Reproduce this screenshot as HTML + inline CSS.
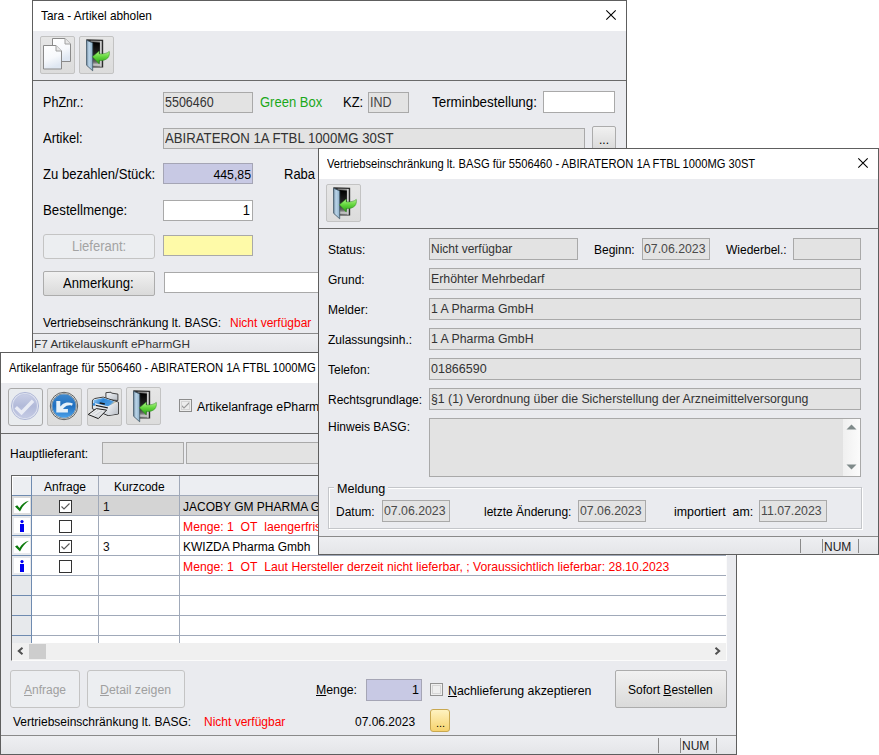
<!DOCTYPE html>
<html><head><meta charset="utf-8">
<style>
*{box-sizing:border-box;margin:0;padding:0}
html,body{width:879px;height:755px;overflow:hidden;background:#fff;font-family:"Liberation Sans",sans-serif;color:#000}
.a{position:absolute}
.t{position:absolute;white-space:nowrap}
svg{overflow:visible}
</style></head><body>
<div class="a" style="left:32px;top:0px;width:595px;height:353px;background:#eaebef;border:1px solid #5e5e5e"></div>
<div class="a" style="left:33px;top:1px;width:593px;height:30px;background:#fff"></div>
<div class="t" style="left:41px;top:9px;font-size:12.4px;line-height:14px;color:#000;;transform:scaleX(0.953);transform-origin:0 0">Tara - Artikel abholen</div>
<svg class="a" style="left:606px;top:10px" width="10" height="10" viewBox="0 0 10 10"><path d="M0.3 0.3L9.7 9.7M9.7 0.3L0.3 9.7" stroke="#000" stroke-width="1.1"/></svg>
<div class="a" style="left:33px;top:80px;width:593px;height:1px;background:#6a6a6a"></div>
<div class="a" style="left:40px;top:36px;width:35px;height:38px;background:linear-gradient(#e6e6e6,#dcdcdc);border:1px solid #c3c3c3;border-radius:2px"></div>
<div class="a" style="left:79px;top:36px;width:35px;height:38px;background:linear-gradient(#e6e6e6,#dcdcdc);border:1px solid #c3c3c3;border-radius:2px"></div>
<svg class="a" style="left:43px;top:38px" width="28" height="32" viewBox="0 0 28 32">
<defs><linearGradient id="pg" x1="0" y1="0" x2="0.3" y2="1"><stop offset="0" stop-color="#fff"/><stop offset="0.6" stop-color="#f7f9fc"/><stop offset="1" stop-color="#dfe7f2"/></linearGradient></defs>
<path d="M9.5 0.5H22L27.5 6V23.5H9.5Z" fill="url(#pg)" stroke="#8a8a8a"/>
<path d="M22 0.5V6H27.5" fill="#e8e8e8" stroke="#a0a0a0"/>
<path d="M0.5 7.5H13L18.5 13V31H0.5Z" fill="url(#pg)" stroke="#8a8a8a"/>
<path d="M13 7.5V13H18.5" fill="#e8e8e8" stroke="#a0a0a0"/>
</svg>
<svg class="a" style="left:85px;top:38px" width="26" height="34" viewBox="0 0 26 34">
<defs>
<linearGradient id="dma" x1="0" y1="0" x2="1" y2="0"><stop offset="0" stop-color="#6a6a6a"/><stop offset="0.8" stop-color="#9c9c9c"/><stop offset="0.9" stop-color="#e0e0e0"/><stop offset="1" stop-color="#7a7a7a"/></linearGradient>
<linearGradient id="dia" x1="0" y1="0" x2="0" y2="1"><stop offset="0" stop-color="#000"/><stop offset="0.6" stop-color="#2a2a2a"/><stop offset="0.85" stop-color="#6a6a6a"/><stop offset="1" stop-color="#e6e6e6"/></linearGradient>
<linearGradient id="dpa" x1="0" y1="0" x2="1" y2="0"><stop offset="0" stop-color="#6d879c"/><stop offset="0.4" stop-color="#bcd6ea"/><stop offset="1" stop-color="#8fb0c8"/></linearGradient>
<linearGradient id="gaa" x1="0" y1="0" x2="0" y2="1"><stop offset="0" stop-color="#b4f58c"/><stop offset="0.45" stop-color="#62d63c"/><stop offset="1" stop-color="#2a9a18"/></linearGradient>
</defs>
<path d="M1.3 1.2L18.2 1.8V29.6H4.5Z" fill="#2c2c2c"/>
<path d="M5.6 2.6L17 3.1V28.7H6Z" fill="url(#dma)"/>
<path d="M6.8 4.1L14.9 4.4V27.6H7Z" fill="url(#dia)"/>
<path d="M1.5 2.2L7.7 4.9V32.8L1.6 27.3Z" fill="url(#dpa)" stroke="#3f5666" stroke-width="0.8"/>
<path d="M7.4 18.8L14.2 13.1V15.9C18.5 16.1 22 15.4 24.3 13.4C25 18.5 22.8 22.8 14.2 22.6V25.9Z" fill="url(#gaa)" stroke="#2a8a1a" stroke-width="0.5"/>
</svg>
<div class="t" style="left:43px;top:96px;font-size:12.6px;line-height:14px;;transform:scaleY(1.1);transform-origin:0 12px">PhZnr.:</div>
<div class="a" style="left:163px;top:92px;width:90px;height:21px;background:#e3e3e3;border:1px solid #a9a9a9"></div>
<div class="t" style="left:165px;top:96px;font-size:12.5px;line-height:14px;color:#333;;transform:scaleY(1.1);transform-origin:0 12px">5506460</div>
<div class="t" style="left:260px;top:95px;font-size:13px;line-height:15px;color:#1aa81a;;transform:scaleY(1.1);transform-origin:0 12px">Green Box</div>
<div class="t" style="left:343px;top:95px;font-size:13px;line-height:15px;;transform:scaleY(1.1);transform-origin:0 12px">KZ:</div>
<div class="a" style="left:368px;top:92px;width:41px;height:21px;background:#e3e3e3;border:1px solid #a9a9a9"></div>
<div class="t" style="left:370px;top:96px;font-size:12.5px;line-height:14px;color:#444;;transform:scaleY(1.1);transform-origin:0 12px">IND</div>
<div class="t" style="left:432px;top:95px;font-size:13.4px;line-height:15px;;transform:scaleY(1.1);transform-origin:0 12px">Terminbestellung:</div>
<div class="a" style="left:543px;top:91px;width:72px;height:22px;background:#fff;border:1px solid #a9a9a9"></div>
<div class="t" style="left:43px;top:131px;font-size:13px;line-height:15px;;transform:scaleY(1.1);transform-origin:0 12px">Artikel:</div>
<div class="a" style="left:163px;top:128px;width:422px;height:21px;background:#e3e3e3;border:1px solid #a9a9a9"></div>
<div class="t" style="left:165px;top:131px;font-size:13.2px;line-height:15px;color:#333;;transform:scaleY(1.1);transform-origin:0 12px">ABIRATERON 1A FTBL 1000MG 30ST</div>
<div class="a" style="left:592px;top:126px;width:24px;height:24px;background:linear-gradient(#f1f1f1,#dadada);border:1px solid #acacac;border-radius:2px"></div>
<div class="t" style="left:599px;top:133px;font-size:12px;line-height:14px;color:#000;">...</div>
<div class="t" style="left:43px;top:167px;font-size:13.1px;line-height:15px;;transform:scaleY(1.1);transform-origin:0 12px">Zu bezahlen/Stück:</div>
<div class="a" style="left:163px;top:163px;width:90px;height:21px;background:#c8c9e4;border:1px solid #a5a5b5"></div>
<div class="t" style="right:628px;top:168px;font-size:12.3px;line-height:14px;text-align:right;color:#000;;transform:scaleY(1.1);transform-origin:0 12px">445,85</div>
<div class="t" style="left:284px;top:167px;font-size:13px;line-height:15px;;transform:scaleY(1.1);transform-origin:0 12px">Raba</div>
<div class="t" style="left:43px;top:203px;font-size:13.3px;line-height:15px;;transform:scaleY(1.1);transform-origin:0 12px">Bestellmenge:</div>
<div class="a" style="left:163px;top:200px;width:90px;height:21px;background:#fff;border:1px solid #a9a9a9"></div>
<div class="t" style="right:629px;top:203px;font-size:13px;line-height:15px;text-align:right;color:#000;;transform:scaleY(1.1);transform-origin:0 12px">1</div>
<div class="a" style="left:43px;top:234px;width:112px;height:25px;background:#eceef1;border:1px solid #c4c4c4;border-radius:3px"></div>
<div class="t" style="left:72px;top:239px;font-size:13px;line-height:15px;color:#a3a3a3;;transform:scaleY(1.1);transform-origin:0 12px">Lieferant:</div>
<div class="a" style="left:163px;top:235px;width:90px;height:21px;background:#fefaa8;border:1px solid #a9a9a9"></div>
<div class="a" style="left:43px;top:271px;width:112px;height:25px;background:linear-gradient(#f1f1f1,#dadada);border:1px solid #acacac;border-radius:2px"></div>
<div class="t" style="left:63px;top:276px;font-size:13.1px;line-height:15px;;transform:scaleY(1.1);transform-origin:0 12px">Anmerkung:</div>
<div class="a" style="left:164px;top:272px;width:400px;height:21px;background:#fff;border:1px solid #a9a9a9"></div>
<div class="t" style="left:43px;top:316px;font-size:12px;line-height:14px;">Vertriebseinschränkung lt. BASG:</div>
<div class="t" style="left:230px;top:316px;font-size:12px;line-height:14px;color:#ff0000;">Nicht verfügbar</div>
<div class="a" style="left:33px;top:333px;width:593px;height:1px;background:#8a8a8a"></div>
<div class="a" style="left:33px;top:334px;width:593px;height:18px;background:linear-gradient(#eeeff2,#e4e5e8)"></div>
<div class="t" style="left:34px;top:337px;font-size:11.8px;line-height:14px;color:#333;">F7 Artikelauskunft ePharmGH</div>
<div class="a" style="left:0px;top:352px;width:737px;height:403px;background:#eaebef;border:1px solid #5e5e5e"></div>
<div class="a" style="left:1px;top:353px;width:735px;height:30px;background:#fff"></div>
<div class="t" style="left:9px;top:361px;font-size:12.4px;line-height:14px;color:#000;;transform:scaleX(0.907);transform-origin:0 0">Artikelanfrage für 5506460 - ABIRATERON 1A FTBL 1000MG 30ST</div>
<div class="a" style="left:1px;top:433px;width:735px;height:1px;background:#6a6a6a"></div>
<div class="a" style="left:8px;top:388px;width:35px;height:38px;background:#e9ecef;border:1px solid #a9a9a9;border-radius:3px"></div>
<div class="a" style="left:47px;top:388px;width:35px;height:38px;background:linear-gradient(#e6e6e6,#dcdcdc);border:1px solid #c3c3c3;border-radius:2px"></div>
<div class="a" style="left:87px;top:388px;width:35px;height:38px;background:linear-gradient(#e6e6e6,#dcdcdc);border:1px solid #c3c3c3;border-radius:2px"></div>
<div class="a" style="left:126px;top:387px;width:35px;height:38px;background:linear-gradient(#e6e6e6,#dcdcdc);border:1px solid #c3c3c3;border-radius:2px"></div>
<svg class="a" style="left:10px;top:391px" width="30" height="30" viewBox="0 0 30 30">
<defs><linearGradient id="cd" x1="0" y1="0" x2="0" y2="1"><stop offset="0" stop-color="#c9cfe6"/><stop offset="0.5" stop-color="#b2bad9"/><stop offset="1" stop-color="#c4cae4"/></linearGradient></defs>
<circle cx="15" cy="15" r="13.6" fill="#dfe3f0" stroke="#aab3d4" stroke-width="0.9"/>
<circle cx="15" cy="15" r="11.8" fill="url(#cd)" stroke="#b9c1de" stroke-width="0.6"/>
<path d="M5.8 16.3L11.5 21.8L23 9.8" fill="none" stroke="#e9ecf5" stroke-width="3.4"/>
</svg>
<svg class="a" style="left:49px;top:391px" width="30" height="30" viewBox="0 0 30 30">
<defs><linearGradient id="ub" x1="0" y1="0" x2="0" y2="1"><stop offset="0" stop-color="#3f88cc"/><stop offset="0.5" stop-color="#1f6fc0"/><stop offset="1" stop-color="#4aa0e8"/></linearGradient></defs>
<circle cx="15" cy="15" r="13.7" fill="#e6eef0" stroke="#505050" stroke-width="0.9"/>
<circle cx="15" cy="15" r="12.3" fill="none" stroke="#6a6a6a" stroke-width="0.8"/>
<circle cx="15" cy="15" r="11.7" fill="url(#ub)"/>
<path d="M7.3 10H11.3V15.5L13.5 13.2C16.5 11 20.5 10.8 23.8 12.6L23 14.8C20 13.8 17.5 14.5 15 16.8L14 18H18.9V21.5H7.3Z" fill="#e6f0f8"/>
</svg>
<svg class="a" style="left:87px;top:388px" width="35" height="37" viewBox="0 0 35 37">
<defs><linearGradient id="pb" x1="0" y1="0" x2="0" y2="1"><stop offset="0" stop-color="#fdfdfd"/><stop offset="1" stop-color="#cfd4da"/></linearGradient>
<linearGradient id="pr" x1="0" y1="0" x2="1" y2="1"><stop offset="0" stop-color="#f4f6f8"/><stop offset="1" stop-color="#b9bec6"/></linearGradient>
<linearGradient id="pt" x1="0" y1="0" x2="1" y2="0.3"><stop offset="0" stop-color="#9ccff6"/><stop offset="0.45" stop-color="#2f86d6"/><stop offset="0.85" stop-color="#4a9ae0"/><stop offset="1" stop-color="#d8c7a6"/></linearGradient>
<linearGradient id="pp" x1="0" y1="0" x2="1" y2="1"><stop offset="0" stop-color="#ffffff"/><stop offset="1" stop-color="#c9cdd2"/></linearGradient></defs>
<path d="M18.9 4.7L24 4.2L24.5 5.1L30.9 6.1V12.5L18.9 11.5Z" fill="url(#pr)" stroke="#333" stroke-width="0.9"/>
<path d="M5.4 13C5.6 11.5 7 10.6 9 10.3L16.2 9.1L31.4 14.2V26L21 27.6L5.4 20.8Z" fill="url(#pb)" stroke="#262626" stroke-width="0.9"/>
<path d="M6.5 12L16.2 9.9L29.8 14.3L21 18.2L6.6 14.8Z" fill="url(#pt)"/>
<path d="M12.7 15L17.8 16" stroke="#1a1a1a" stroke-width="1.4"/>
<path d="M8.6 16.8L20.8 19.3V20.4L8.8 18Z" fill="#1c1c1c"/>
<path d="M21 18.4L30.8 14.6V25.7L21 27.2Z" fill="url(#pr)"/>
<path d="M7 15.6A0.9 0.9 0 1 0 7.01 15.6" fill="#2f86d6" stroke="#2f86d6"/>
<path d="M1.2 26.5L9.3 20.6L19.6 22.1L11.3 30.6Z" fill="url(#pp)" stroke="#1e1e1e" stroke-width="1"/>
<path d="M5 26L11.5 21.8M8 27.5L15 23" stroke="#b0b6bd" stroke-width="0.5"/>
</svg>
<svg class="a" style="left:132px;top:389px" width="26" height="34" viewBox="0 0 26 34">
<defs>
<linearGradient id="dmb" x1="0" y1="0" x2="1" y2="0"><stop offset="0" stop-color="#6a6a6a"/><stop offset="0.8" stop-color="#9c9c9c"/><stop offset="0.9" stop-color="#e0e0e0"/><stop offset="1" stop-color="#7a7a7a"/></linearGradient>
<linearGradient id="dib" x1="0" y1="0" x2="0" y2="1"><stop offset="0" stop-color="#000"/><stop offset="0.6" stop-color="#2a2a2a"/><stop offset="0.85" stop-color="#6a6a6a"/><stop offset="1" stop-color="#e6e6e6"/></linearGradient>
<linearGradient id="dpb" x1="0" y1="0" x2="1" y2="0"><stop offset="0" stop-color="#6d879c"/><stop offset="0.4" stop-color="#bcd6ea"/><stop offset="1" stop-color="#8fb0c8"/></linearGradient>
<linearGradient id="gab" x1="0" y1="0" x2="0" y2="1"><stop offset="0" stop-color="#b4f58c"/><stop offset="0.45" stop-color="#62d63c"/><stop offset="1" stop-color="#2a9a18"/></linearGradient>
</defs>
<path d="M1.3 1.2L18.2 1.8V29.6H4.5Z" fill="#2c2c2c"/>
<path d="M5.6 2.6L17 3.1V28.7H6Z" fill="url(#dmb)"/>
<path d="M6.8 4.1L14.9 4.4V27.6H7Z" fill="url(#dib)"/>
<path d="M1.5 2.2L7.7 4.9V32.8L1.6 27.3Z" fill="url(#dpb)" stroke="#3f5666" stroke-width="0.8"/>
<path d="M7.4 18.8L14.2 13.1V15.9C18.5 16.1 22 15.4 24.3 13.4C25 18.5 22.8 22.8 14.2 22.6V25.9Z" fill="url(#gab)" stroke="#2a8a1a" stroke-width="0.5"/>
</svg>
<svg class="a" style="left:179px;top:399px" width="13" height="13" viewBox="0 0 13 13"><rect x="0.5" y="0.5" width="12" height="12" fill="#ececec" stroke="#8c8c8c"/><path d="M2.5 6.5L5 9L10.5 3.5" fill="none" stroke="#9a9a9a" stroke-width="1.1"/></svg>
<div class="a" style="left:181px;top:401px;width:9px;height:9px;border:1px solid #d4d4d4"></div>
<div class="t" style="left:197px;top:400px;font-size:12.3px;line-height:14px;">Artikelanfrage ePharmGH</div>
<div class="t" style="left:10px;top:447px;font-size:12px;line-height:14px;">Hauptlieferant:</div>
<div class="a" style="left:102px;top:442px;width:82px;height:22px;background:#e3e3e3;border:1px solid #a9a9a9"></div>
<div class="a" style="left:186px;top:442px;width:400px;height:22px;background:#e3e3e3;border:1px solid #a9a9a9"></div>
<div class="a" style="left:11px;top:475px;width:716px;height:186px;background:#fff;border-left:1px solid #646464;border-top:1px solid #646464;border-right:1px solid #fbfbfb;border-bottom:1px solid #fbfbfb"></div>
<div class="a" style="left:12px;top:476px;width:714px;height:19px;background:#eceef2"></div>
<div class="a" style="left:12px;top:476px;width:19px;height:19px;background:#eceef2;border-left:1px solid #fff;border-top:1px solid #fff"></div>
<div class="t" style="left:44px;top:480px;font-size:12px;line-height:14px;">Anfrage</div>
<div class="t" style="left:114px;top:480px;font-size:12px;line-height:14px;">Kurzcode</div>
<div class="a" style="left:31px;top:496px;width:695px;height:19px;background:#d4d4d4"></div>
<div class="a" style="left:12px;top:496px;width:19px;height:147px;background:#e7e9ec"></div>
<div class="a" style="left:12px;top:496px;width:19px;height:19px;background:#dcdcdc"></div>
<div class="a" style="left:14px;top:498px;width:16px;height:15px;background:#fff"></div>
<div class="a" style="left:14px;top:518px;width:16px;height:15px;background:#fff"></div>
<div class="a" style="left:14px;top:538px;width:16px;height:15px;background:#fff"></div>
<div class="a" style="left:14px;top:558px;width:16px;height:15px;background:#fff"></div>
<div class="a" style="left:31px;top:476px;width:1px;height:167px;background:#6f8bb0"></div>
<div class="a" style="left:98px;top:476px;width:1px;height:167px;background:#a0a9b9"></div>
<div class="a" style="left:179px;top:476px;width:1px;height:167px;background:#a0a9b9"></div>
<div class="a" style="left:32px;top:495px;width:694px;height:1px;background:#a0a9b9"></div>
<div class="a" style="left:12px;top:495px;width:19px;height:1px;background:#6f8bb0"></div>
<div class="a" style="left:32px;top:515px;width:694px;height:1px;background:#a0a9b9"></div>
<div class="a" style="left:12px;top:515px;width:19px;height:1px;background:#6f8bb0"></div>
<div class="a" style="left:32px;top:535px;width:694px;height:1px;background:#a0a9b9"></div>
<div class="a" style="left:12px;top:535px;width:19px;height:1px;background:#6f8bb0"></div>
<div class="a" style="left:32px;top:555px;width:694px;height:1px;background:#a0a9b9"></div>
<div class="a" style="left:12px;top:555px;width:19px;height:1px;background:#6f8bb0"></div>
<div class="a" style="left:32px;top:575px;width:694px;height:1px;background:#a0a9b9"></div>
<div class="a" style="left:12px;top:575px;width:19px;height:1px;background:#6f8bb0"></div>
<div class="a" style="left:32px;top:595px;width:694px;height:1px;background:#a0a9b9"></div>
<div class="a" style="left:12px;top:595px;width:19px;height:1px;background:#6f8bb0"></div>
<div class="a" style="left:32px;top:615px;width:694px;height:1px;background:#a0a9b9"></div>
<div class="a" style="left:12px;top:615px;width:19px;height:1px;background:#6f8bb0"></div>
<div class="a" style="left:32px;top:635px;width:694px;height:1px;background:#a0a9b9"></div>
<div class="a" style="left:12px;top:635px;width:19px;height:1px;background:#6f8bb0"></div>
<svg class="a" style="left:15px;top:500px" width="14" height="12" viewBox="0 0 14 12"><path d="M0 6.5L2.2 5.2L4.5 8C6.5 4.5 9.5 1.8 14 0.8C10 3.5 7.5 6.5 5 11.5Z" fill="#0b7a0b"/></svg>
<svg class="a" style="left:19px;top:520px" width="6" height="12" viewBox="0 0 6 12"><circle cx="3" cy="1.6" r="1.6" fill="#0000f0"/><rect x="1" y="4" width="4" height="8" fill="#0000f0"/></svg>
<svg class="a" style="left:15px;top:540px" width="14" height="12" viewBox="0 0 14 12"><path d="M0 6.5L2.2 5.2L4.5 8C6.5 4.5 9.5 1.8 14 0.8C10 3.5 7.5 6.5 5 11.5Z" fill="#0b7a0b"/></svg>
<svg class="a" style="left:19px;top:560px" width="6" height="12" viewBox="0 0 6 12"><circle cx="3" cy="1.6" r="1.6" fill="#0000f0"/><rect x="1" y="4" width="4" height="8" fill="#0000f0"/></svg>
<svg class="a" style="left:59px;top:500px" width="13" height="13" viewBox="0 0 13 13"><rect x="0.5" y="0.5" width="12" height="12" fill="#fff" stroke="#333"/><path d="M2.5 6.5L5 9L10.5 3.5" fill="none" stroke="#555" stroke-width="1.1"/></svg>
<svg class="a" style="left:59px;top:520px" width="13" height="13" viewBox="0 0 13 13"><rect x="0.5" y="0.5" width="12" height="12" fill="#fff" stroke="#333"/></svg>
<svg class="a" style="left:59px;top:540px" width="13" height="13" viewBox="0 0 13 13"><rect x="0.5" y="0.5" width="12" height="12" fill="#fff" stroke="#333"/><path d="M2.5 6.5L5 9L10.5 3.5" fill="none" stroke="#555" stroke-width="1.1"/></svg>
<svg class="a" style="left:59px;top:560px" width="13" height="13" viewBox="0 0 13 13"><rect x="0.5" y="0.5" width="12" height="12" fill="#fff" stroke="#333"/></svg>
<div class="t" style="left:103px;top:500px;font-size:12px;line-height:14px;color:#111;">1</div>
<div class="t" style="left:183px;top:500px;font-size:12px;line-height:14px;">JACOBY GM PHARMA GmbH</div>
<div class="t" style="left:183px;top:520px;font-size:12.2px;line-height:14px;color:#ff0000;">Menge: 1&nbsp; OT&nbsp; laengerfristig nicht lieferbar</div>
<div class="t" style="left:103px;top:540px;font-size:12px;line-height:14px;color:#111;">3</div>
<div class="t" style="left:183px;top:540px;font-size:12px;line-height:14px;">KWIZDA Pharma Gmbh</div>
<div class="t" style="left:183px;top:560px;font-size:12.2px;line-height:14px;color:#ff0000;">Menge: 1&nbsp; OT&nbsp; Laut Hersteller derzeit nicht lieferbar, ; Voraussichtlich lieferbar: 28.10.2023</div>
<div class="a" style="left:12px;top:643px;width:714px;height:17px;background:#f0f0f0"></div>
<div class="a" style="left:29px;top:644px;width:17px;height:15px;background:#cdcdcd"></div>
<svg class="a" style="left:17px;top:647px" width="7" height="8" viewBox="0 0 7 8"><path d="M5.5 0.8L1.8 4L5.5 7.2" fill="none" stroke="#505050" stroke-width="2"/></svg>
<svg class="a" style="left:714px;top:647px" width="7" height="8" viewBox="0 0 7 8"><path d="M1.5 0.8L5.2 4L1.5 7.2" fill="none" stroke="#505050" stroke-width="2"/></svg>
<div class="a" style="left:10px;top:670px;width:70px;height:38px;background:#eceef1;border:1px solid #c4c4c4;border-radius:3px"></div>
<div class="t" style="left:24px;top:683px;font-size:12px;line-height:14px;color:#a0a0a0;"><u>A</u>nfrage</div>
<div class="a" style="left:87px;top:670px;width:98px;height:38px;background:#eceef1;border:1px solid #c4c4c4;border-radius:3px"></div>
<div class="t" style="left:100px;top:683px;font-size:12.3px;line-height:14px;color:#a0a0a0;"><u>D</u>etail zeigen</div>
<div class="t" style="left:316px;top:683px;font-size:12.3px;line-height:14px;"><u>M</u>enge:</div>
<div class="a" style="left:366px;top:679px;width:56px;height:22px;background:#c8c9e4;border:1px solid #a5a5b5"></div>
<div class="t" style="right:460px;top:683px;font-size:12.5px;line-height:14px;text-align:right;color:#000;">1</div>
<svg class="a" style="left:430px;top:683px" width="13" height="13" viewBox="0 0 13 13"><rect x="0.5" y="0.5" width="12" height="12" fill="#efefef" stroke="#939393"/></svg>
<div class="a" style="left:432px;top:685px;width:9px;height:9px;border:1px solid #d6d6d6"></div>
<div class="t" style="left:448px;top:684px;font-size:12.35px;line-height:14px;"><u>N</u>achlieferung akzeptieren</div>
<div class="a" style="left:615px;top:670px;width:112px;height:38px;background:linear-gradient(#f1f1f1,#dadada);border:1px solid #acacac;border-radius:2px"></div>
<div class="t" style="left:628px;top:683px;font-size:12px;line-height:14px;">Sofort <u>B</u>estellen</div>
<div class="t" style="left:13px;top:715px;font-size:12px;line-height:14px;">Vertriebseinschränkung lt. BASG:</div>
<div class="t" style="left:204px;top:715px;font-size:12px;line-height:14px;color:#ff0000;">Nicht verfügbar</div>
<div class="t" style="left:355px;top:715px;font-size:12px;line-height:14px;">07.06.2023</div>
<div class="a" style="left:430px;top:709px;width:20px;height:23px;background:linear-gradient(#fff2c0,#f6d36e);border:1px solid #c9a850;border-radius:3px"></div>
<div class="t" style="left:436px;top:716px;font-size:11px;line-height:14px;color:#000;">...</div>
<div class="a" style="left:1px;top:735px;width:735px;height:1px;background:#8a8a8a"></div>
<div class="a" style="left:1px;top:736px;width:735px;height:18px;background:linear-gradient(#eeeff2,#e4e5e8)"></div>
<div class="a" style="left:658px;top:738px;width:1px;height:15px;background:#8a8a8a"></div>
<div class="a" style="left:680px;top:738px;width:1px;height:15px;background:#8a8a8a"></div>
<div class="a" style="left:716px;top:738px;width:1px;height:15px;background:#8a8a8a"></div>
<div class="t" style="left:682px;top:739px;font-size:12px;line-height:14px;color:#222;">NUM</div>
<div class="a" style="left:318px;top:148px;width:561px;height:407px;background:#eaebef;border:1px solid #5e5e5e"></div>
<div class="a" style="left:319px;top:149px;width:559px;height:30px;background:#fff"></div>
<div class="t" style="left:327px;top:157px;font-size:12.4px;line-height:14px;color:#000;;transform:scaleX(0.901);transform-origin:0 0">Vertriebseinschränkung lt. BASG für 5506460 - ABIRATERON 1A FTBL 1000MG 30ST</div>
<svg class="a" style="left:858px;top:158px" width="10" height="10" viewBox="0 0 10 10"><path d="M0.3 0.3L9.7 9.7M9.7 0.3L0.3 9.7" stroke="#000" stroke-width="1.1"/></svg>
<div class="a" style="left:319px;top:228px;width:559px;height:1px;background:#6a6a6a"></div>
<div class="a" style="left:326px;top:184px;width:35px;height:38px;background:linear-gradient(#e6e6e6,#dcdcdc);border:1px solid #c3c3c3;border-radius:2px"></div>
<svg class="a" style="left:332px;top:186px" width="26" height="34" viewBox="0 0 26 34">
<defs>
<linearGradient id="dmc" x1="0" y1="0" x2="1" y2="0"><stop offset="0" stop-color="#6a6a6a"/><stop offset="0.8" stop-color="#9c9c9c"/><stop offset="0.9" stop-color="#e0e0e0"/><stop offset="1" stop-color="#7a7a7a"/></linearGradient>
<linearGradient id="dic" x1="0" y1="0" x2="0" y2="1"><stop offset="0" stop-color="#000"/><stop offset="0.6" stop-color="#2a2a2a"/><stop offset="0.85" stop-color="#6a6a6a"/><stop offset="1" stop-color="#e6e6e6"/></linearGradient>
<linearGradient id="dpc" x1="0" y1="0" x2="1" y2="0"><stop offset="0" stop-color="#6d879c"/><stop offset="0.4" stop-color="#bcd6ea"/><stop offset="1" stop-color="#8fb0c8"/></linearGradient>
<linearGradient id="gac" x1="0" y1="0" x2="0" y2="1"><stop offset="0" stop-color="#b4f58c"/><stop offset="0.45" stop-color="#62d63c"/><stop offset="1" stop-color="#2a9a18"/></linearGradient>
</defs>
<path d="M1.3 1.2L18.2 1.8V29.6H4.5Z" fill="#2c2c2c"/>
<path d="M5.6 2.6L17 3.1V28.7H6Z" fill="url(#dmc)"/>
<path d="M6.8 4.1L14.9 4.4V27.6H7Z" fill="url(#dic)"/>
<path d="M1.5 2.2L7.7 4.9V32.8L1.6 27.3Z" fill="url(#dpc)" stroke="#3f5666" stroke-width="0.8"/>
<path d="M7.4 18.8L14.2 13.1V15.9C18.5 16.1 22 15.4 24.3 13.4C25 18.5 22.8 22.8 14.2 22.6V25.9Z" fill="url(#gac)" stroke="#2a8a1a" stroke-width="0.5"/>
</svg>
<div class="t" style="left:328px;top:243px;font-size:12px;line-height:14px;">Status:</div>
<div class="t" style="left:328px;top:273px;font-size:12px;line-height:14px;">Grund:</div>
<div class="t" style="left:328px;top:303px;font-size:12px;line-height:14px;">Melder:</div>
<div class="t" style="left:328px;top:333px;font-size:12px;line-height:14px;">Zulassungsinh.:</div>
<div class="t" style="left:328px;top:363px;font-size:12px;line-height:14px;">Telefon:</div>
<div class="t" style="left:328px;top:393px;font-size:12px;line-height:14px;">Rechtsgrundlage:</div>
<div class="t" style="left:328px;top:420px;font-size:12px;line-height:14px;">Hinweis BASG:</div>
<div class="a" style="left:429px;top:238px;width:149px;height:22px;background:#e3e3e3;border:1px solid #a9a9a9"></div>
<div class="t" style="left:431px;top:242px;font-size:12px;line-height:14px;color:#333;">Nicht verfügbar</div>
<div class="t" style="left:594px;top:243px;font-size:12px;line-height:14px;">Beginn:</div>
<div class="a" style="left:642px;top:238px;width:68px;height:22px;background:#e3e3e3;border:1px solid #a9a9a9"></div>
<div class="t" style="left:644px;top:242px;font-size:12.3px;line-height:14px;color:#4a4a4a;">07.06.2023</div>
<div class="t" style="left:726px;top:243px;font-size:12px;line-height:14px;">Wiederbel.:</div>
<div class="a" style="left:793px;top:238px;width:68px;height:22px;background:#e3e3e3;border:1px solid #a9a9a9"></div>
<div class="a" style="left:429px;top:268px;width:432px;height:22px;background:#e3e3e3;border:1px solid #a9a9a9"></div>
<div class="t" style="left:431px;top:272px;font-size:12.3px;line-height:14px;color:#333;">Erhöhter Mehrbedarf</div>
<div class="a" style="left:429px;top:298px;width:432px;height:22px;background:#e3e3e3;border:1px solid #a9a9a9"></div>
<div class="t" style="left:431px;top:302px;font-size:12.3px;line-height:14px;color:#333;">1 A Pharma GmbH</div>
<div class="a" style="left:429px;top:328px;width:432px;height:22px;background:#e3e3e3;border:1px solid #a9a9a9"></div>
<div class="t" style="left:431px;top:332px;font-size:12.3px;line-height:14px;color:#333;">1 A Pharma GmbH</div>
<div class="a" style="left:429px;top:358px;width:432px;height:22px;background:#e3e3e3;border:1px solid #a9a9a9"></div>
<div class="t" style="left:431px;top:362px;font-size:12.5px;line-height:14px;color:#333;">01866590</div>
<div class="a" style="left:429px;top:388px;width:432px;height:22px;background:#e3e3e3;border:1px solid #a9a9a9"></div>
<div class="t" style="left:431px;top:392px;font-size:12.3px;line-height:14px;color:#333;">§1 (1) Verordnung über die Sicherstellung der Arzneimittelversorgung</div>
<div class="a" style="left:429px;top:418px;width:432px;height:59px;background:#e3e3e3;border:1px solid #a9a9a9"></div>
<div class="a" style="left:843px;top:419px;width:17px;height:57px;background:linear-gradient(90deg,#f0f0f0,#fbfbfb)"></div>
<svg class="a" style="left:846px;top:424px" width="11" height="6" viewBox="0 0 11 6"><path d="M0.5 5.5L5.5 0.5L10.5 5.5Z" fill="#7f8a8a"/></svg>
<svg class="a" style="left:846px;top:464px" width="11" height="6" viewBox="0 0 11 6"><path d="M0.5 0.5L5.5 5.5L10.5 0.5Z" fill="#7f8a8a"/></svg>
<div class="a" style="left:328px;top:487px;width:534px;height:42px;border:1px solid #c4c6ca;box-shadow:inset 1px 1px 0 #fff,1px 1px 0 #fff"></div>
<div class="a" style="left:334px;top:482px;width:54px;height:12px;background:#eaebef"></div>
<div class="t" style="left:337px;top:482px;font-size:12.6px;line-height:14px;">Meldung</div>
<div class="t" style="left:336px;top:505px;font-size:12px;line-height:14px;">Datum:</div>
<div class="a" style="left:382px;top:500px;width:68px;height:22px;background:#e3e3e3;border:1px solid #a9a9a9"></div>
<div class="t" style="left:384px;top:504px;font-size:12.3px;line-height:14px;color:#4a4a4a;">07.06.2023</div>
<div class="t" style="left:484px;top:505px;font-size:12px;line-height:14px;">letzte Änderung:</div>
<div class="a" style="left:578px;top:500px;width:68px;height:22px;background:#e3e3e3;border:1px solid #a9a9a9"></div>
<div class="t" style="left:580px;top:504px;font-size:12.3px;line-height:14px;color:#4a4a4a;">07.06.2023</div>
<div class="t" style="left:674px;top:505px;font-size:12.4px;line-height:14px;">importiert&nbsp; am:</div>
<div class="a" style="left:759px;top:500px;width:68px;height:22px;background:#e3e3e3;border:1px solid #a9a9a9"></div>
<div class="t" style="left:761px;top:504px;font-size:12.3px;line-height:14px;color:#4a4a4a;">11.07.2023</div>
<div class="a" style="left:319px;top:536px;width:559px;height:1px;background:#8a8a8a"></div>
<div class="a" style="left:319px;top:537px;width:559px;height:17px;background:linear-gradient(#eeeff2,#e4e5e8)"></div>
<div class="a" style="left:800px;top:539px;width:1px;height:14px;background:#8a8a8a"></div>
<div class="a" style="left:822px;top:539px;width:1px;height:14px;background:#8a8a8a"></div>
<div class="a" style="left:858px;top:539px;width:1px;height:14px;background:#8a8a8a"></div>
<div class="t" style="left:824px;top:540px;font-size:12px;line-height:14px;color:#222;">NUM</div>
</body></html>
